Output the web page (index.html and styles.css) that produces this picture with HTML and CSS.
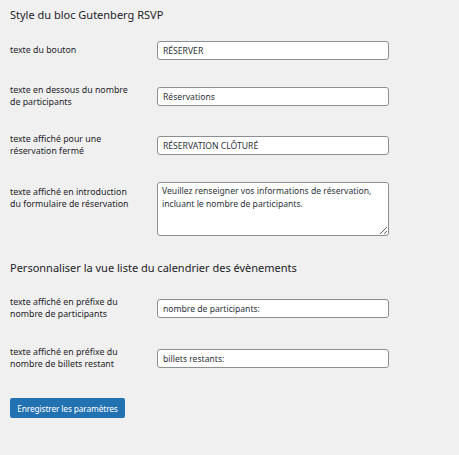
FILE: index.html
```html
<!DOCTYPE html>
<html lang="fr">
<head>
<meta charset="utf-8">
<link rel="stylesheet" href="styles.css">
</head>
<body>
<div class="wrap">
  <h2 class="title first">Style du bloc Gutenberg RSVP</h2>
  <div class="form">
    <div class="row r1">
      <label class="label">texte du bouton</label>
      <input class="field" type="text" value="RÉSERVER">
    </div>
    <div class="row r2">
      <label class="label">texte en dessous du nombre de participants</label>
      <input class="field" type="text" value="Réservations">
    </div>
    <div class="row r3">
      <label class="label">texte affiché pour une réservation fermé</label>
      <input class="field" type="text" value="RÉSERVATION CLÔTURÉ">
    </div>
    <div class="row r4 top">
      <label class="label">texte affiché en introduction du formulaire de réservation</label>
      <textarea class="area">Veuillez renseigner vos informations de réservation, incluant le nombre de participants.</textarea>
    </div>
  </div>
  <h2 class="title second">Personnaliser la vue liste du calendrier des évènements</h2>
  <div class="form">
    <div class="row r5">
      <label class="label">texte affiché en préfixe du nombre de participants</label>
      <input class="field" type="text" value="nombre de participants:">
    </div>
    <div class="row r6">
      <label class="label">texte affiché en préfixe du nombre de billets restant</label>
      <input class="field" type="text" value="billets restants:">
    </div>
  </div>
  <button class="submit" type="button">Enregistrer les paramètres</button>
</div>
</body>
</html>
```
FILE: styles.css
```css
html, body {
  margin: 0;
  padding: 0;
  background: #f0f0f1;
}
body {
  font-family: "Noto Sans", "Open Sans", sans-serif;
  color: #1d2327;
  font-size: 8.8px;
  line-height: 11.5px;
}
.wrap {
  padding: 8px 10px 0 10px;
}
.title {
  margin: 0;
  font-weight: 400;
  font-size: 11px;
  line-height: 14px;
  color: #1d2327;
}
.form {
  display: flex;
  flex-direction: column;
}
.row {
  display: flex;
  align-items: center;
}
.row.top {
  align-items: flex-start;
}
.row.top .label {
  padding-top: 5px;
}
.label {
  box-sizing: border-box;
  width: 147px;
  padding-right: 20px;
  flex: none;
}
.r1 { margin-top: 19px; }
.r2 { margin-top: 25px; }
.r3 { margin-top: 26px; }
.r4 { margin-top: 25px; }
.second { margin-top: 24.5px; }
.r5 { margin-top: 22.5px; }
.r6 { margin-top: 27px; }
.field, .area {
  box-sizing: border-box;
  width: 232px;
  margin: 0;
  border: 1px solid #8c8f94;
  border-radius: 3px;
  background: #fff;
  color: #2c3338;
  font-family: inherit;
  font-size: 8.6px;
}
.field {
  height: 19px;
  padding: 0 5px;
}
.area {
  height: 54px;
  padding: 2px 4px;
  line-height: 12.6px;
  resize: both;
}
.submit {
  display: block;
  margin-top: 28px;
  height: 20px;
  width: 115px;
  padding: 0;
  border: 0;
  border-radius: 2px;
  background: #2271b1;
  color: #fff;
  font-family: inherit;
  font-size: 8.4px;
  letter-spacing: -0.15px;
}
```
